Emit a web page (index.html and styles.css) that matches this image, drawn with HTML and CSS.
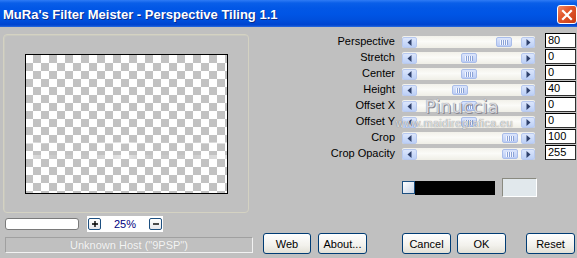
FILE: index.html
```html
<!DOCTYPE html>
<html>
<head>
<meta charset="utf-8">
<link rel="stylesheet" href="styles.css">
</head>
<body>
<div class="window">
  <div class="titlebar">
    <span class="title">MuRa's Filter Meister - Perspective Tiling 1.1</span>
    <span class="close"><svg width="12" height="12" viewBox="0 0 12 12"><path d="M2 2 L10 10 M10 2 L2 10" stroke="#fff" stroke-width="2.2" stroke-linecap="square"/></svg></span>
  </div>
  <div class="main">
    <div class="left">
      <div class="group">
        <div class="preview"><div class="streak s1"></div><div class="streak s2"></div></div>
      </div>
      <div class="controls">
        <div class="field"></div>
        <div class="zoombox">
          <span class="zbtn"><svg width="6" height="6" viewBox="0 0 6 6"><path d="M0 3H6M3 0V6" stroke="#000" stroke-width="1.4"/></svg></span>
          <span class="zval">25%</span>
          <span class="zbtn"><svg width="6" height="6" viewBox="0 0 6 6"><path d="M0 3H6" stroke="#000" stroke-width="1.4"/></svg></span>
        </div>
      </div>
    </div>
    <div class="right">
      <div class="rows">
        <div class="row"><span class="label">Perspective</span><div class="slider"><span class="arr"><svg width="5" height="7" viewBox="0 0 5 7"><path d="M4.5 0 L0.5 3.5 L4.5 7Z" fill="#2f416c"/></svg></span><div class="track"><span class="thumb" style="margin-left:79px"><i></i></span></div><span class="arr"><svg width="5" height="7" viewBox="0 0 5 7"><path d="M0.5 0 L4.5 3.5 L0.5 7Z" fill="#2f416c"/></svg></span></div><span class="num">80</span></div>
        <div class="row"><span class="label">Stretch</span><div class="slider"><span class="arr"><svg width="5" height="7" viewBox="0 0 5 7"><path d="M4.5 0 L0.5 3.5 L4.5 7Z" fill="#2f416c"/></svg></span><div class="track"><span class="thumb" style="margin-left:44px"><i></i></span></div><span class="arr"><svg width="5" height="7" viewBox="0 0 5 7"><path d="M0.5 0 L4.5 3.5 L0.5 7Z" fill="#2f416c"/></svg></span></div><span class="num">0</span></div>
        <div class="row"><span class="label">Center</span><div class="slider"><span class="arr"><svg width="5" height="7" viewBox="0 0 5 7"><path d="M4.5 0 L0.5 3.5 L4.5 7Z" fill="#2f416c"/></svg></span><div class="track"><span class="thumb" style="margin-left:44px"><i></i></span></div><span class="arr"><svg width="5" height="7" viewBox="0 0 5 7"><path d="M0.5 0 L4.5 3.5 L0.5 7Z" fill="#2f416c"/></svg></span></div><span class="num">0</span></div>
        <div class="row"><span class="label">Height</span><div class="slider"><span class="arr"><svg width="5" height="7" viewBox="0 0 5 7"><path d="M4.5 0 L0.5 3.5 L4.5 7Z" fill="#2f416c"/></svg></span><div class="track"><span class="thumb" style="margin-left:35px"><i></i></span></div><span class="arr"><svg width="5" height="7" viewBox="0 0 5 7"><path d="M0.5 0 L4.5 3.5 L0.5 7Z" fill="#2f416c"/></svg></span></div><span class="num">40</span></div>
        <div class="row"><span class="label">Offset X</span><div class="slider"><span class="arr"><svg width="5" height="7" viewBox="0 0 5 7"><path d="M4.5 0 L0.5 3.5 L4.5 7Z" fill="#2f416c"/></svg></span><div class="track"><span class="thumb" style="margin-left:44px"><i></i></span></div><span class="arr"><svg width="5" height="7" viewBox="0 0 5 7"><path d="M0.5 0 L4.5 3.5 L0.5 7Z" fill="#2f416c"/></svg></span></div><span class="num">0</span></div>
        <div class="row"><span class="label">Offset Y</span><div class="slider"><span class="arr"><svg width="5" height="7" viewBox="0 0 5 7"><path d="M4.5 0 L0.5 3.5 L4.5 7Z" fill="#2f416c"/></svg></span><div class="track"><span class="thumb" style="margin-left:44px"><i></i></span></div><span class="arr"><svg width="5" height="7" viewBox="0 0 5 7"><path d="M0.5 0 L4.5 3.5 L0.5 7Z" fill="#2f416c"/></svg></span></div><span class="num">0</span></div>
        <div class="row"><span class="label">Crop</span><div class="slider"><span class="arr"><svg width="5" height="7" viewBox="0 0 5 7"><path d="M4.5 0 L0.5 3.5 L4.5 7Z" fill="#2f416c"/></svg></span><div class="track"><span class="thumb" style="margin-left:85px"><i></i></span></div><span class="arr"><svg width="5" height="7" viewBox="0 0 5 7"><path d="M0.5 0 L4.5 3.5 L0.5 7Z" fill="#2f416c"/></svg></span></div><span class="num">100</span></div>
        <div class="row"><span class="label">Crop Opacity</span><div class="slider"><span class="arr"><svg width="5" height="7" viewBox="0 0 5 7"><path d="M4.5 0 L0.5 3.5 L4.5 7Z" fill="#2f416c"/></svg></span><div class="track"><span class="thumb" style="margin-left:85px"><i></i></span></div><span class="arr"><svg width="5" height="7" viewBox="0 0 5 7"><path d="M0.5 0 L4.5 3.5 L0.5 7Z" fill="#2f416c"/></svg></span></div><span class="num">255</span></div>
      </div>
      <div class="colorrow">
        <span class="cbtn"></span>
        <span class="cbar"></span>
        <span class="swatch"></span>
      </div>
    </div>
  </div>
  <div class="bottom">
    <div class="status">Unknown Host ("9PSP")</div>
    <button class="btn web">Web</button>
    <button class="btn about">About...</button>
    <button class="btn cancel">Cancel</button>
    <button class="btn ok">OK</button>
    <button class="btn reset">Reset</button>
  </div>
  <div class="watermark">
    <span class="wm1">Pinuccia</span>
    <span class="wm2">www.maidiregrafica.eu</span>
  </div>
</div>
</body>
</html>
```
FILE: styles.css
```css
* { box-sizing: border-box; }
html, body { margin: 0; padding: 0; }
body { background: #c0c0c0; font-family: "Liberation Sans", Arial, sans-serif; font-size: 11px; color: #000; }
.window { position: relative; width: 577px; height: 258px; background: #c0c0c0; overflow: hidden; }

.titlebar {
  height: 27px;
  display: flex; align-items: flex-start;
  background: linear-gradient(#2f7bf5 0, #0a5fe8 3px, #0257e6 8px, #0055e5 14px, #004fdc 20px, #0044cf 25px, #2a6be0 27px);
}
.title { margin: 7px 0 0 3px; color: #fff; font-weight: bold; font-size: 13px; line-height: 15px; text-shadow: 1px 1px 0 #0a2c8a; white-space: nowrap; flex: 1; }
.close {
  width: 20px; height: 19px; margin: 5px 0 0 0;
  border: 1px solid #fff; border-radius: 3px;
  background: linear-gradient(135deg, #f08a66 0, #e2572c 40%, #c93c14 100%);
  display: flex; align-items: center; justify-content: center;
}

.main { display: flex; height: 206px; }
.left { width: 253px; }
.group {
  margin: 7px 0 0 3px; width: 246px; height: 179px;
  border: 1px solid #d4d2c2; border-radius: 4px;
  box-shadow: inset 1px 1px 0 #c8c8c0;
  padding: 19px 0 0 21px;
}
.preview {
  position: relative;
  width: 203px; height: 140px; border: 1px solid #000;
  background: conic-gradient(#c2c2c2 0 25%, #fff 0 50%, #c2c2c2 0 75%, #fff 0);
  background-size: 16px 16px;
  background-position: 15px 0;
}
.streak {
  position: absolute; left: 0; right: 0; height: 3px;
  background: linear-gradient(90deg, rgba(255,255,255,0.55), rgba(255,255,255,0.15) 12%, rgba(255,255,255,0.05) 30%, rgba(255,255,255,0.6) 48%, rgba(255,255,255,0.1) 62%, rgba(255,255,255,0.1) 78%, rgba(255,255,255,0.55) 100%);
}
.s1 { top: 87px; height: 2px; }
.s2 { top: 100px; height: 4px; }

.controls { display: flex; align-items: flex-start; margin-top: 3px; }
.field { margin: 2px 0 0 5px; width: 74px; height: 12px; background: #fff; border: 1px solid #7a7a7a; border-radius: 3px; }
.zoombox { margin-left: 8px; width: 76px; height: 16px; background: #fff; display: flex; align-items: center; padding: 0 1px; }
.zbtn {
  width: 13px; height: 12px; border: 1px solid #1c4f80; border-radius: 2px;
  background: linear-gradient(#ffffff, #e6e6ec);
  display: flex; align-items: center; justify-content: center;
}
.zval { flex: 1; text-align: center; color: #000080; font-size: 11px; line-height: 14px; }

.right { flex: 1; }
.rows { padding-top: 6px; }
.row { display: flex; align-items: flex-start; height: 16px; }
.label { width: 142px; text-align: right; line-height: 15px; padding-top: 1px; white-space: nowrap; }
.slider {
  margin: 3px 0 0 7px; width: 133px; height: 12px;
  display: flex; align-items: center;
  background: linear-gradient(#f2f1ea, #fbfbf8 45%, #efeee6);
  border-radius: 2px;
}
.arr {
  width: 15px; height: 11px; border-radius: 2px;
  background: linear-gradient(#dbe6fc, #bccff6);
  border: 1px solid #b8c9ef;
  display: flex; align-items: center; justify-content: center;
  flex: none;
}
.slider .arr:last-child { width: 14px; }
.track { flex: 1; height: 12px; display: flex; align-items: center; }
.thumb {
  width: 16px; height: 10px; border-radius: 2px;
  background: linear-gradient(#dbe5fc, #bccdf5);
  border: 1px solid #a9bdea;
  display: flex; align-items: center; justify-content: center;
}
.thumb i {
  display: block; width: 8px; height: 5px;
  background: repeating-linear-gradient(90deg, #f4f7ff 0 1px, #8aa2d6 1px 2px);
}
.num {
  margin: 0 0 0 10px; width: 31px; height: 15px;
  background: #fff; border: 1px solid #000; border-right-color: #303030; border-bottom-color: #303030;
  font-size: 11px; line-height: 13px; padding-left: 2px;
}

.colorrow { display: flex; align-items: center; height: 19px; margin-top: 17px; }
.cbtn { margin-left: 149px; width: 13px; height: 13px; border: 1px solid #1c4f80; background: linear-gradient(135deg, #ffffff, #c8d4e6); }
.cbar { width: 80px; height: 14px; background: #000; }
.swatch { margin-left: 7px; width: 35px; height: 19px; background: #e1e8ec; border: 1px solid #fff; border-top-color: #8a8a80; border-left-color: #8a8a80; }

.bottom { display: flex; align-items: flex-start; height: 25px; }
.status {
  margin: 4px 0 0 5px; width: 248px; height: 16px;
  border: 1px solid #f2f2f2; border-top-color: #a0a0a0; border-left-color: #a0a0a0;
  text-align: center; color: #f4f4f4; font-size: 11px; line-height: 14px;
  text-shadow: 0 0 1px #b0b0b0;
}
.btn {
  height: 21px; border: 1px solid #003c74; border-radius: 3px;
  background: linear-gradient(#ffffff, #f2f1ec 60%, #e2e0d6);
  font-family: "Liberation Sans", Arial, sans-serif; font-size: 11px; color: #000;
  padding: 0; margin: 0;
}
.web { margin-left: 10px; width: 48px; }
.about { margin-left: 7px; width: 49px; }
.cancel { margin-left: 35px; width: 49px; }
.ok { margin-left: 6px; width: 49px; }
.reset { margin-left: 20px; width: 49px; }

.watermark { position: absolute; left: 396px; top: 97px; width: 125px; display: flex; flex-direction: column; align-items: flex-start; pointer-events: none; }
.wm1 { margin-left: 29px; font-family: "DejaVu Sans", sans-serif; font-size: 17px; line-height: 20px; color: rgba(235,235,240,0.85); text-shadow: 0 0 1px #6a6a78, 1px 1px 0 #8a8a94; letter-spacing: 0.5px; }
.wm2 { margin-top: 1px; font-family: "Liberation Sans", sans-serif; font-size: 11px; line-height: 11px; color: rgba(240,240,240,0.9); text-shadow: 0 0 1px #55555f; letter-spacing: 0.3px; }
```
